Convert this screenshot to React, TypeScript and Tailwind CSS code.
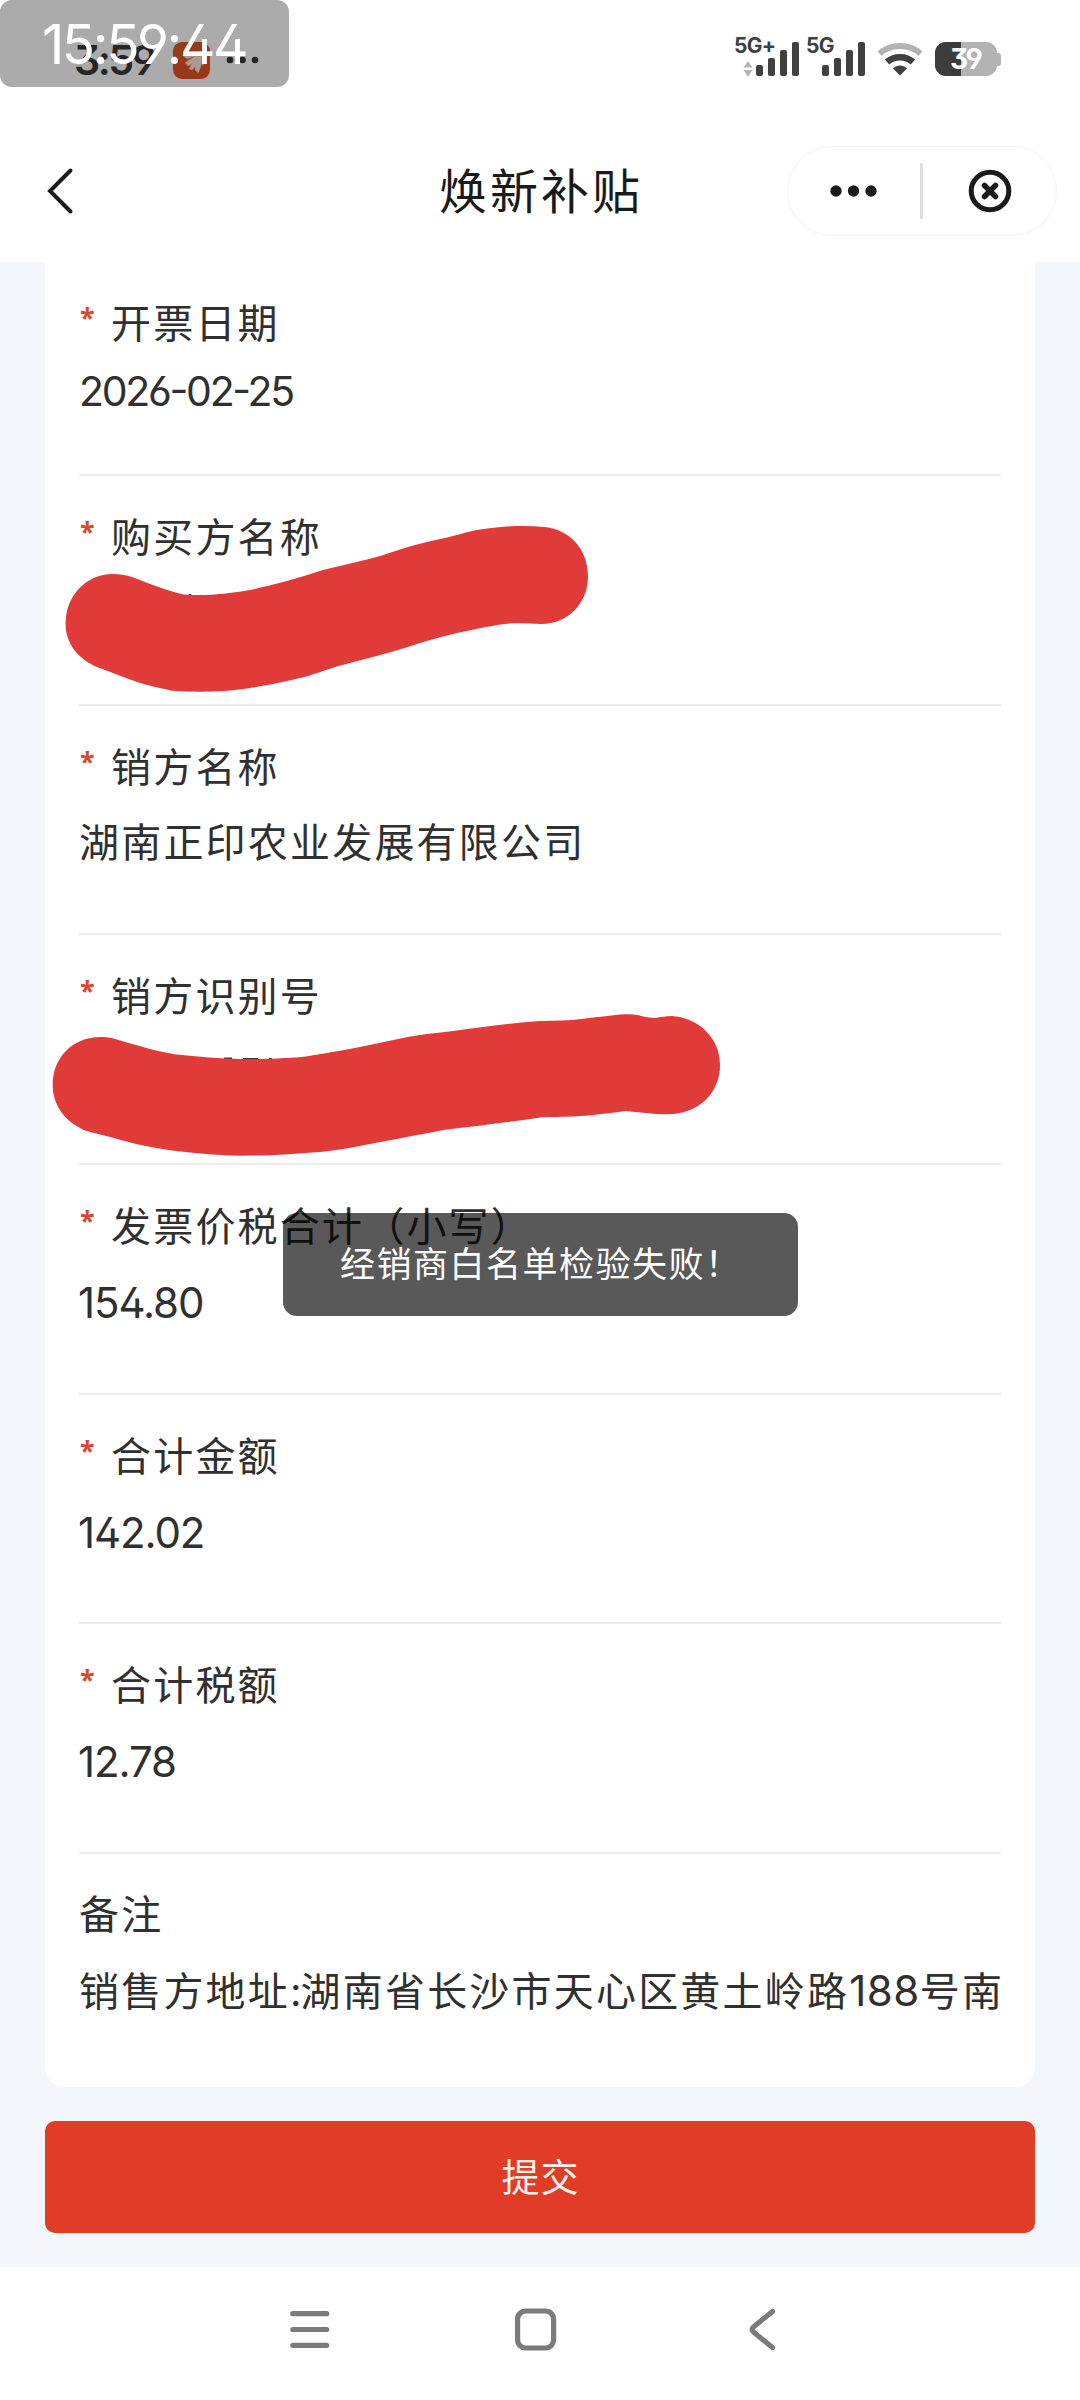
import type { ReactNode } from "react";

interface Field {
  label: string;
  value?: string;
  required: boolean;
  numeric?: boolean;
  hidden?: ReactNode;
}

const BuyerMask = () => (
  <svg
    width="600"
    height="200"
    viewBox="50 510 600 200"
    className="absolute -left-[29px] top-[34px]"
  >
    <circle cx="190" cy="596" r="2" fill="#333" />
    <path
      fill="#e13b39"
      d="M65.6 622.7C66 596 86 574 112.7 574C120 574 126 575 132 577C150 584 168 591 183.5 594.5C205 596 228 594 246.7 590.5C260 588 272 585 285 581.5C298 578 310 574 323 570C338 566 354 563 369 559C385 555 400 549 415 545C430 541 444 538.5 457 535C469 531.5 480 529 491.6 528C510 525.5 528 525.5 545 527C570 530 588 549 588 576.7C588 603 568 624 541 624C526 623 512 622.5 499 624.7C480 628 460 632 442 636.7C425 641 409 647 392 651.7C374 657 356 661 338.5 666C328 669 318 673 308 676C288 681 267 685.5 246.7 688.5C222 692 196 692.5 172 690.7C160 688 150 686 139.5 682.7C125 678 111 672 97.4 667.3C78 659 65 643 65.6 622.7Z"
    />
  </svg>
);

const SellerIdMask = () => (
  <svg
    width="720"
    height="200"
    viewBox="40 980 720 200"
    className="absolute -left-[39px] top-[45px]"
  >
    <path d="M224 1059h8M243 1059.500h15M269 1059.500h3" stroke="#333" strokeWidth="3" />
    <path
      fill="#e13b39"
      d="M52.7 1085C52.7 1058 72 1037 100.8 1037C106 1037 110 1037.500 115 1039C136 1045 155 1051 176 1054.500C198 1056.500 220 1059 242 1059C257 1059 271 1059 285 1058C294 1058 304 1057 313 1055.300C326 1053 338 1051 351 1048.700C376 1044 401 1037.500 426.400 1034C446 1032 464 1029.500 483 1027C499 1025 514 1023 530 1021.700C544 1020.500 558 1021 572.700 1020C588 1018.500 604 1016 620 1014.500C627 1014 633 1014 639 1015.200C645 1017 650 1018 655 1018C661 1017 666 1016 672 1016C699 1018 720 1038 720 1065C720 1092 700 1114 667 1114.300C652 1114.300 639 1112 625.600 1111C608 1113 590 1116 572.700 1116.500C562 1117.200 552 1116.700 542 1117.300C510 1122 476 1126 445 1129.700C422 1134 401 1138 379 1142.300C360 1146 341 1150 322.600 1151.700C296 1154 268 1155.700 242 1155.700C220 1155.700 198 1153.500 176 1151C162 1149 148 1147 134 1143.500C118 1139 102 1135 86.600 1131C66 1123 52.700 1106 52.700 1085Z"
    />
  </svg>
);

const fields: Field[] = [
  { label: "购买方名称", required: true, hidden: <BuyerMask /> },
  { label: "销方名称", value: "湖南正印农业发展有限公司", required: true },
  { label: "销方识别号", required: true, hidden: <SellerIdMask /> },
  { label: "发票价税合计（小写）", value: "154.80", required: true, numeric: true },
  { label: "合计金额", value: "142.02", required: true, numeric: true },
  { label: "合计税额", value: "12.78", required: true, numeric: true },
];

const Label = ({ text, required }: { text: string; required: boolean }) => (
  <div className="flex h-[62px] items-center whitespace-nowrap text-[40px] leading-[62px] tracking-[2.2px]">
    {required && (
      <span className="h-[62px] w-[32px] pl-[1px] font-['Noto_Sans'] text-[27px] font-bold leading-[49px] tracking-normal text-[#d4492f]">
        *
      </span>
    )}
    {text}
  </div>
);

const Signal = () => (
  <svg width="44" height="36" viewBox="0 0 44 36" fill="#404040">
    <rect x="0" y="24" width="7" height="11" rx="2" />
    <rect x="12" y="17" width="7" height="18" rx="2" />
    <rect x="24" y="9" width="7" height="26" rx="2" />
    <rect x="36" y="1" width="7" height="34" rx="2" />
  </svg>
);

const StatusBar = () => (
  <div className="flex h-[120px] items-start justify-between">
    <div className="flex items-center pl-[74px] pt-[36px]">
      <span className="w-[99px] font-['Inter'] text-[41px] font-semibold leading-[48px] tracking-[-2.5px] text-[#3a3a3a] [font-feature-settings:'ss01']">
        3:59
      </span>
      <svg width="37" height="37" viewBox="0 0 37 37">
        <rect width="37" height="37" rx="9" fill="#e85424" />
        <g fill="#ffe6dc">
          <path d="M9 13C15 11 22 11 28 9C26 12 21 15 14 17Z" />
          <path d="M12 21C16 17 21 15 26 12C23 18 19 23 15 24Z" />
          <path d="M16 27C18 22 22 17 27 12C26 19 23 25 19 28Z" />
          <path d="M22 28C22 22 25 17 28 12C30 19 28 27 25 31Z" />
          <path d="M29 12C32 15 32 20 30 24C28 20 28 16 29 12Z" />
        </g>
      </svg>
      <svg width="34" height="8" viewBox="0 0 34 8" fill="#3a3a3a" className="ml-[16px]">
        <circle cx="4" cy="4" r="3.300" />
        <circle cx="16.500" cy="4" r="3.300" />
        <circle cx="29" cy="4" r="3.300" />
      </svg>
    </div>

    <div className="flex pr-[79px] pt-[35px] font-['Inter'] text-[#404040]">
      <div className="relative h-[42px] w-[72px]">
        <span className="absolute -left-[1px] top-0 text-[21px] font-bold leading-[22px] tracking-[-0.7px]">
          5G+
        </span>
        <svg width="10" height="16" viewBox="0 0 10 16" fill="#b3b3b3" className="absolute left-[8px] top-[26px]">
          <path d="M5 0L9.500 6.500H0.500Z" />
          <path d="M5 16L9.500 9H0.500Z" />
        </svg>
        <div className="absolute left-[21px] top-[6px]">
          <Signal />
        </div>
      </div>
      <div className="relative h-[42px] w-[70px]">
        <span className="absolute -left-[1px] top-0 text-[21px] font-bold leading-[22px] tracking-[-0.7px]">
          5G
        </span>
        <div className="absolute left-[15px] top-[6px]">
          <Signal />
        </div>
      </div>
      <svg width="46" height="34" viewBox="0 0 46 34" className="mt-[7px]" fill="none">
        <path d="M2.500 11.500C14 1.500 32 1.500 43.500 11.500" stroke="#b3b3b3" strokeWidth="6" />
        <path d="M10 20C17 13.500 29 13.500 36 20" stroke="#404040" strokeWidth="6.500" />
        <path d="M16 26.500C20 22.500 26 22.500 30 26.500L23 33.500Z" fill="#404040" />
      </svg>
      <div className="ml-[12px] mt-[7px] flex h-[34px] items-center">
        <div className="relative h-[34px] w-[62px] overflow-hidden rounded-[11px] bg-[#b3b3b3]">
          <div className="h-full w-[26px] bg-[#3c3c3c]" />
          <span className="absolute left-[15px] top-0 text-[28px] font-bold leading-[34px] tracking-[-2.500px] text-white [font-feature-settings:'ss01']">
            39
          </span>
        </div>
        <div className="h-[13px] w-[4px] rounded-r-[3px] bg-[#b3b3b3]" />
      </div>
    </div>
  </div>
);

const TitleBar = () => (
  <div className="flex h-[142px] items-start pl-[46px] pr-[23px] pt-[26px]">
    <button className="flex h-[90px] w-[393px] items-center">
      <svg width="28" height="48" viewBox="0 0 28 48" fill="none">
        <path d="M24.500 3.500L4 24L24.500 44.500" stroke="#1c1c1c" strokeWidth="4" strokeLinecap="round" />
      </svg>
    </button>
    <h1 className="w-[348px] pt-[1px] text-[48px] font-normal leading-[90px] tracking-[3px] text-[#1a1a1a]">
      焕新补贴
    </h1>
    <div className="flex h-[90px] w-[270px] items-center rounded-full border-[1.500px] border-[#f3f3f3]">
      <svg width="132" height="20" viewBox="0 0 132 20" fill="#1a1a1a">
        <circle cx="48" cy="10" r="5.700" />
        <circle cx="65.500" cy="10" r="5.700" />
        <circle cx="83" cy="10" r="5.700" />
      </svg>
      <div className="h-[56px] w-[3px] bg-[#dedede]" />
      <svg width="132" height="46" viewBox="0 0 132 46" fill="none" stroke="#1a1a1a" strokeLinecap="round">
        <circle cx="67" cy="23" r="18.800" strokeWidth="5" />
        <path d="M61.500 17.500L72.500 28.500M72.500 17.500L61.500 28.500" strokeWidth="5.500" />
      </svg>
    </div>
  </div>
);

const NavBar = () => (
  <div className="flex h-[133px] justify-center bg-white pt-[40px]">
    <svg width="500" height="44" viewBox="0 0 500 44" fill="none" stroke="#7b7b7b" strokeWidth="5.200" strokeLinecap="round" strokeLinejoin="round">
      <path d="M2.800 6.700H36.700M2.800 22.500H36.700M2.800 38.300H36.700" />
      <rect x="227.600" y="4" width="36" height="37" rx="8" />
      <path d="M482.500 4.500L464 19.500Q460 22.500 464 25.500L482.500 40.500" />
    </svg>
  </div>
);

export default function App() {
  return (
    <div className="relative flex h-[2400px] w-[1080px] flex-col overflow-hidden bg-white font-['Inter','Noto_Sans_CJK_SC',sans-serif] text-[#303030]">
      <StatusBar />
      <TitleBar />

      <main className="h-[2005px] bg-[#f3f7fb] px-[45px]">
        <div className="h-[1825px] rounded-b-[20px] bg-white px-[34px]">
          <div className="h-[214px] border-b-2 border-[#ececec] pt-[31px]">
            <Label text="开票日期" required />
            <div className="mt-[5px] text-[41px] leading-[62px] tracking-[-2.300px] [font-feature-settings:'ss01','case']">
              2026-02-25
            </div>
          </div>

          {fields.map((field) => (
            <div
              key={field.label}
              className="h-[229.660px] border-b-2 border-[#ececec] pt-[31px]"
            >
              <Label text={field.label} required={field.required} />
              <div
                className={`relative mt-[13px] h-[62px] whitespace-nowrap ${
                  field.numeric
                    ? "-left-[1px] text-[42px] leading-[64px] tracking-[-1.100px] [font-feature-settings:'ss01']"
                    : "text-[40px] leading-[62px] tracking-[2.200px]"
                }`}
              >
                {field.value}
                {field.hidden && (
                  <div className="absolute left-0 top-[-106px]">{field.hidden}</div>
                )}
              </div>
            </div>
          ))}

          {/* Remark */}
          <div className="pt-[30px]">
            <Label text="备注" required={false} />
            <div className="mt-[14px] whitespace-nowrap text-[40px] leading-[62px] tracking-[2.200px]">
              销售方地址<span className="tracking-[-1px]">:</span>
              湖南省长沙市天心区黄土岭路
              <span className="text-[42px] tracking-[0.500px]">188</span>号南
            </div>
          </div>
        </div>

        <button className="mt-[34px] flex h-[112px] w-full items-center justify-center rounded-[10px] bg-[#e03c26] pb-[1px] pl-[1px] text-[38px] leading-[108px] tracking-[1px] text-[#fff3ec]">
          提交
        </button>
      </main>

      <NavBar />

      {/* Toast */}
      <div className="absolute left-[283px] top-[1213px] flex h-[103px] w-[515px] items-center rounded-[14px] bg-black/65 pl-[57px] text-[35px] tracking-[1.500px] text-white">
        经销商白名单检验失败！
      </div>

      {/* Floating clock */}
      <div className="absolute left-0 top-0 h-[87px] w-[289px] rounded-[12px] bg-black/33 pl-[42px] text-[55px] leading-[88px] tracking-[-2.500px] text-white [font-feature-settings:'ss01']">
        15:59:44
      </div>
    </div>
  );
}
